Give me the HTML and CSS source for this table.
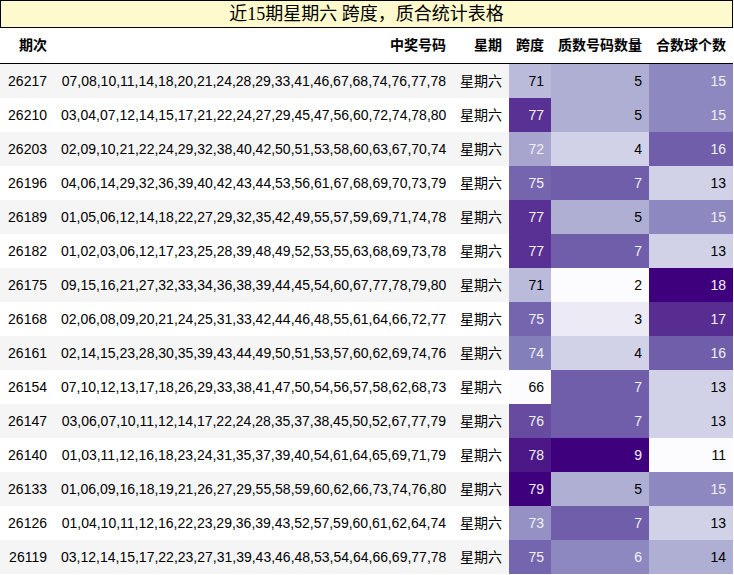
FILE: index.html
```html
<!DOCTYPE html>
<html lang="zh">
<head>
<meta charset="utf-8">
<title>近15期星期六 跨度，质合统计表格</title>
<link rel="stylesheet" href="styles.css">
</head>
<body>
<table class="stats">
<caption class="title">近15期星期六 跨度，质合统计表格</caption>
<colgroup>
<col class="c-period"><col class="c-nums"><col class="c-week"><col class="c-span"><col class="c-prime"><col class="c-comp">
</colgroup>
<thead>
<tr><th>期次</th><th>中奖号码</th><th>星期</th><th>跨度</th><th>质数号码数量</th><th>合数球个数</th></tr>
</thead>
<tbody>
<tr><td>26217</td><td>07,08,10,11,14,18,20,21,24,28,29,33,41,46,67,68,74,76,77,78</td><td>星期六</td><td class="dk" style="background:rgb(186,186,218)">71</td><td class="dk" style="background:rgb(175,174,211)">5</td><td class="lt" style="background:rgb(141,137,192)">15</td></tr>
<tr><td>26210</td><td>03,04,07,12,14,15,17,21,22,24,27,29,45,47,56,60,72,74,78,80</td><td>星期六</td><td class="lt" style="background:rgb(89,49,148)">77</td><td class="dk" style="background:rgb(175,174,211)">5</td><td class="lt" style="background:rgb(141,137,192)">15</td></tr>
<tr><td>26203</td><td>02,09,10,21,22,24,29,32,38,40,42,50,51,53,58,60,63,67,70,74</td><td>星期六</td><td class="lt" style="background:rgb(167,165,206)">72</td><td class="dk" style="background:rgb(209,210,231)">4</td><td class="lt" style="background:rgb(112,94,170)">16</td></tr>
<tr><td>26196</td><td>04,06,14,29,32,36,39,40,42,43,44,53,56,61,67,68,69,70,73,79</td><td>星期六</td><td class="lt" style="background:rgb(116,101,174)">75</td><td class="lt" style="background:rgb(112,94,170)">7</td><td class="dk" style="background:rgb(209,210,231)">13</td></tr>
<tr><td>26189</td><td>01,05,06,12,14,18,22,27,29,32,35,42,49,55,57,59,69,71,74,78</td><td>星期六</td><td class="lt" style="background:rgb(89,49,148)">77</td><td class="dk" style="background:rgb(175,174,211)">5</td><td class="lt" style="background:rgb(141,137,192)">15</td></tr>
<tr><td>26182</td><td>01,02,03,06,12,17,23,25,28,39,48,49,52,53,55,63,68,69,73,78</td><td>星期六</td><td class="lt" style="background:rgb(89,49,148)">77</td><td class="lt" style="background:rgb(112,94,170)">7</td><td class="dk" style="background:rgb(209,210,231)">13</td></tr>
<tr><td>26175</td><td>09,15,16,21,27,32,33,34,36,38,39,44,45,54,60,67,77,78,79,80</td><td>星期六</td><td class="dk" style="background:rgb(186,186,218)">71</td><td class="dk" style="background:rgb(252,251,253)">2</td><td class="lt" style="background:rgb(63,0,125)">18</td></tr>
<tr><td>26168</td><td>02,06,08,09,20,21,24,25,31,33,42,44,46,48,55,61,64,66,72,77</td><td>星期六</td><td class="lt" style="background:rgb(116,101,174)">75</td><td class="dk" style="background:rgb(236,234,244)">3</td><td class="lt" style="background:rgb(87,45,146)">17</td></tr>
<tr><td>26161</td><td>02,14,15,23,28,30,35,39,43,44,49,50,51,53,57,60,62,69,74,76</td><td>星期六</td><td class="lt" style="background:rgb(130,127,187)">74</td><td class="dk" style="background:rgb(209,210,231)">4</td><td class="lt" style="background:rgb(112,94,170)">16</td></tr>
<tr><td>26154</td><td>07,10,12,13,17,18,26,29,33,38,41,47,50,54,56,57,58,62,68,73</td><td>星期六</td><td class="dk" style="background:rgb(252,251,253)">66</td><td class="lt" style="background:rgb(112,94,170)">7</td><td class="dk" style="background:rgb(209,210,231)">13</td></tr>
<tr><td>26147</td><td>03,06,07,10,11,12,14,17,22,24,28,35,37,38,45,50,52,67,77,79</td><td>星期六</td><td class="lt" style="background:rgb(103,75,160)">76</td><td class="lt" style="background:rgb(112,94,170)">7</td><td class="dk" style="background:rgb(209,210,231)">13</td></tr>
<tr><td>26140</td><td>01,03,11,12,16,18,23,24,31,35,37,39,40,54,61,64,65,69,71,79</td><td>星期六</td><td class="lt" style="background:rgb(76,24,136)">78</td><td class="lt" style="background:rgb(63,0,125)">9</td><td class="dk" style="background:rgb(252,251,253)">11</td></tr>
<tr><td>26133</td><td>01,06,09,16,18,19,21,26,27,29,55,58,59,60,62,66,73,74,76,80</td><td>星期六</td><td class="lt" style="background:rgb(63,0,125)">79</td><td class="dk" style="background:rgb(175,174,211)">5</td><td class="lt" style="background:rgb(141,137,192)">15</td></tr>
<tr><td>26126</td><td>01,04,10,11,12,16,22,23,29,36,39,43,52,57,59,60,61,62,64,74</td><td>星期六</td><td class="lt" style="background:rgb(149,145,196)">73</td><td class="lt" style="background:rgb(112,94,170)">7</td><td class="dk" style="background:rgb(209,210,231)">13</td></tr>
<tr><td>26119</td><td>03,12,14,15,17,22,23,27,31,39,43,46,48,53,54,64,66,69,77,78</td><td>星期六</td><td class="lt" style="background:rgb(116,101,174)">75</td><td class="lt" style="background:rgb(141,137,192)">6</td><td class="dk" style="background:rgb(175,174,211)">14</td></tr>
</tbody>
</table>
</body>
</html>
```
FILE: styles.css
```css
html, body {
  margin: 0;
  padding: 0;
  background: #ffffff;
}

.stats {
  width: 733px;
  table-layout: fixed;
  border-collapse: collapse;
  border-spacing: 0;
  font-family: "Liberation Sans", "Noto Sans CJK SC", sans-serif;
  font-size: 14px;
  color: #000000;
}

.title {
  background: #fffacd;
  border: 1px solid #000000;
  font-family: "Liberation Serif", "Noto Sans CJK SC", serif;
  font-size: 18px;
  line-height: 26px;
  text-align: center;
  color: #000000;
}

.c-period { width: 54px; }
.c-nums { width: 399px; }
.c-week { width: 56px; }
.c-span { width: 42px; }
.c-prime { width: 98px; }
.c-comp { width: 84px; }

.stats thead {
  border-bottom: 1px solid #000000;
}

.stats th,
.stats td {
  text-align: right;
  vertical-align: middle;
  padding: 7px;
  line-height: 20px;
  white-space: nowrap;
  border: none;
}

.stats th {
  font-weight: bold;
  line-height: 21px;
}

.stats tbody tr:nth-child(odd) {
  background: #f5f5f5;
}

.stats td.lt {
  color: #f1f1f1;
}

.stats td.dk {
  color: #000000;
}
```
